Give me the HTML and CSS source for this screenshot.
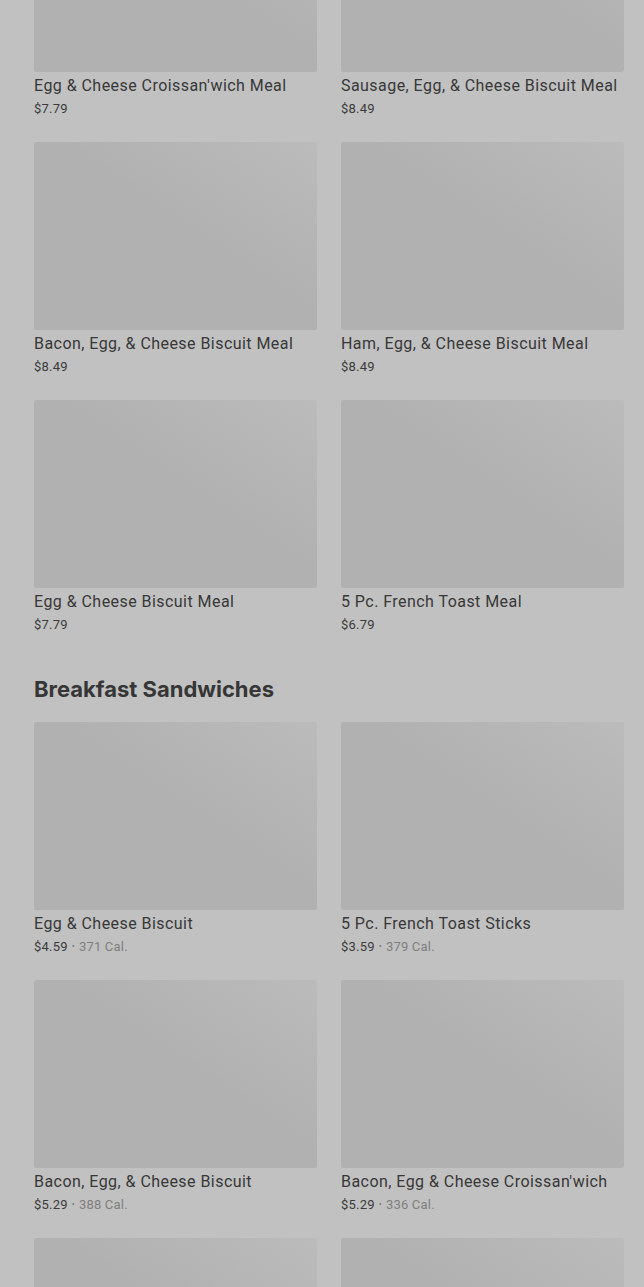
FILE: index.html
```html
<!DOCTYPE html>
<html lang="en">
<head>
    <meta charset="UTF-8">
    <meta name="viewport" content="width=device-width, initial-scale=1.0">
    <title>Breakfast Menu</title>
    <link rel="stylesheet" href="styles.css">
</head>
<body>
    <div class="menu">
        <section class="category">
            <div class="grid">
                <div class="item">
                    <div class="item-image"></div>
                    <div class="item-name">Egg &amp; Cheese Croissan'wich Meal</div>
                    <div class="item-info"><span class="price">$7.79</span></div>
                </div>
                <div class="item">
                    <div class="item-image"></div>
                    <div class="item-name">Sausage, Egg, &amp; Cheese Biscuit Meal</div>
                    <div class="item-info"><span class="price">$8.49</span></div>
                </div>
                <div class="item">
                    <div class="item-image"></div>
                    <div class="item-name">Bacon, Egg, &amp; Cheese Biscuit Meal</div>
                    <div class="item-info"><span class="price">$8.49</span></div>
                </div>
                <div class="item">
                    <div class="item-image"></div>
                    <div class="item-name">Ham, Egg, &amp; Cheese Biscuit Meal</div>
                    <div class="item-info"><span class="price">$8.49</span></div>
                </div>
                <div class="item">
                    <div class="item-image"></div>
                    <div class="item-name">Egg &amp; Cheese Biscuit Meal</div>
                    <div class="item-info"><span class="price">$7.79</span></div>
                </div>
                <div class="item">
                    <div class="item-image"></div>
                    <div class="item-name">5 Pc. French Toast Meal</div>
                    <div class="item-info"><span class="price">$6.79</span></div>
                </div>
            </div>
        </section>

        <section class="category">
            <h2>Breakfast Sandwiches</h2>
            <div class="grid">
                <div class="item">
                    <div class="item-image"></div>
                    <div class="item-name">Egg &amp; Cheese Biscuit</div>
                    <div class="item-info"><span class="price">$4.59</span><span class="dot">•</span><span class="cal">371 Cal.</span></div>
                </div>
                <div class="item">
                    <div class="item-image"></div>
                    <div class="item-name">5 Pc. French Toast Sticks</div>
                    <div class="item-info"><span class="price">$3.59</span><span class="dot">•</span><span class="cal">379 Cal.</span></div>
                </div>
                <div class="item">
                    <div class="item-image"></div>
                    <div class="item-name">Bacon, Egg, &amp; Cheese Biscuit</div>
                    <div class="item-info"><span class="price">$5.29</span><span class="dot">•</span><span class="cal">388 Cal.</span></div>
                </div>
                <div class="item">
                    <div class="item-image"></div>
                    <div class="item-name">Bacon, Egg &amp; Cheese Croissan'wich</div>
                    <div class="item-info"><span class="price">$5.29</span><span class="dot">•</span><span class="cal">336 Cal.</span></div>
                </div>
                <div class="item">
                    <div class="item-image"></div>
                </div>
                <div class="item">
                    <div class="item-image"></div>
                </div>
            </div>
        </section>
    </div>
</body>
</html>
```

FILE: styles.css
```css
body {
    margin: 0;
    padding: 0;
    background-color: #c1c1c1;
    font-family: Roboto, "Liberation Sans", sans-serif;
    color: #3b3b3b;
    overflow: hidden;
}

/* page is scrolled part way into the first category */
.menu {
    margin-top: -116px;
    padding: 0 20px 0 34px;
}

.category {
    margin-bottom: 39px;
}

.category h2 {
    margin: 0 0 18px;
    font-family: Inter, sans-serif;
    font-size: 22px;
    font-weight: 700;
    line-height: 30px;
    color: #363636;
}

.grid {
    display: grid;
    grid-template-columns: 283px 283px;
    column-gap: 24px;
    row-gap: 23px;
}

.item-image {
    height: 188px;
    border-radius: 2px;
    background: linear-gradient(to top right, #b1b1b1 55%, #bbbbbb);
}

.item-name {
    margin-top: 3px;
    font-size: 16px;
    font-weight: 400;
    letter-spacing: 0.45px;
    line-height: 22px;
    white-space: nowrap;
    color: #383838;
}

.item-info {
    display: flex;
    align-items: center;
    gap: 4px;
    height: 22px;
    font-size: 13px;
    letter-spacing: 0.2px;
}

.price {
    color: #3b3b3b;
}

.dot {
    font-size: 9px;
    line-height: 1;
    color: #7a7a7a;
}

.cal {
    color: #7f7f7f;
}
```
